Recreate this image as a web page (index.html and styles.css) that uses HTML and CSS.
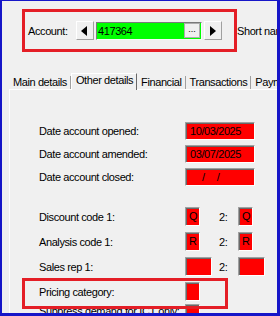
FILE: index.html
```html
<!DOCTYPE html>
<html lang="en">
<head>
    <meta charset="UTF-8">
    <meta name="viewport" content="width=device-width, initial-scale=1.0">
    <title>Account - Other details</title>
    <link rel="stylesheet" href="styles.css">
</head>
<body>
    <div class="window">
        <div class="head">
            <div class="account-box">
                <span class="account-label">Account:</span>
                <button class="nav"><span class="arrow-left"></span></button>
                <div class="lookup">
                    <span class="lookup-value">417364</span>
                    <button class="dots">...</button>
                </div>
                <button class="nav"><span class="arrow-right"></span></button>
            </div>
            <span class="short-name">Short name:</span>
        </div>

        <div class="tabs">
            <div class="tab">Main details</div>
            <div class="tab active">Other details</div>
            <div class="tab">Financial</div>
            <div class="tab">Transactions</div>
            <div class="tab">Payments</div>
        </div>

        <div class="panel">
            <div class="row">
                <span class="label">Date account opened:</span>
                <span class="field date">10/03/2025</span>
            </div>
            <div class="row">
                <span class="label">Date account amended:</span>
                <span class="field date">03/07/2025</span>
            </div>
            <div class="row">
                <span class="label">Date account closed:</span>
                <span class="field date"><span class="blank"></span>/<span class="blank"></span>/</span>
            </div>

            <div class="row code first">
                <span class="label">Discount code 1:</span>
                <span class="cell"><span class="field small">Q</span></span>
                <span class="num">2:</span>
                <span class="field small">Q</span>
            </div>
            <div class="row code">
                <span class="label">Analysis code 1:</span>
                <span class="cell"><span class="field small">R</span></span>
                <span class="num">2:</span>
                <span class="field small">R</span>
            </div>
            <div class="row code">
                <span class="label">Sales rep 1:</span>
                <span class="cell"><span class="field wide"></span></span>
                <span class="num">2:</span>
                <span class="field wide"></span>
            </div>
            <div class="row code marked">
                <span class="label">Pricing category:</span>
                <span class="cell"><span class="field small"></span></span>
            </div>
            <div class="row code last">
                <span class="label">Suppress demand for ICT only:</span>
                <span class="cell"><span class="field small"></span></span>
            </div>
        </div>
    </div>
</body>
</html>
```

FILE: styles.css
```css
* {
    box-sizing: border-box;
}
body {
    margin: 0;
    font-family: "Liberation Sans", Arial, sans-serif;
    font-size: 11px;
    letter-spacing: -0.4px;
    color: #000;
    background: #f0f0f0;
}
.window {
    width: 280px;
    height: 316px;
    border: solid #1616c8;
    border-width: 1px 3px 3px 2px;
    background: #f0f0f0;
    overflow: hidden;
}

/* account header */
.head {
    display: flex;
    align-items: center;
    margin: 8px 0 0 20px;
    white-space: nowrap;
}
.account-box {
    flex-shrink: 0;
    display: flex;
    align-items: center;
    width: 215px;
    height: 43px;
    padding-left: 3px;
    border: 3px solid #e41e26;
}
.account-label {
    width: 48px;
}
.nav {
    display: flex;
    align-items: center;
    justify-content: center;
    width: 18px;
    height: 19px;
    padding: 0;
    border: 1px solid;
    border-color: #fff #a0a0a0 #a0a0a0 #fff;
    background: #f0f0f0;
}
.arrow-left {
    border-top: 5px solid transparent;
    border-bottom: 5px solid transparent;
    border-right: 6px solid #000;
    margin-left: -3px;
}
.arrow-right {
    border-top: 5px solid transparent;
    border-bottom: 5px solid transparent;
    border-left: 6px solid #000;
}
.lookup {
    display: flex;
    align-items: center;
    width: 106px;
    height: 18px;
    margin: 0 2px;
    padding-left: 1px;
    border: 1px solid;
    border-color: #7a7a7a #f8f8f8 #f8f8f8 #7a7a7a;
    background: #00ff00;
}
.lookup-value {
    flex: 1;
}
.dots {
    width: 16px;
    height: 15px;
    margin-right: 1px;
    padding: 0 0 3px;
    border: 1px solid #adadad;
    background: #f0f0f0;
    font: 9px "Liberation Sans", Arial, sans-serif;
    line-height: 9px;
    color: #000;
}
.short-name {
    margin-left: 0;
}

/* tabs */
.tabs {
    display: flex;
    align-items: flex-end;
    height: 16px;
    margin: 21px 0 0 7px;
    white-space: nowrap;
}
.tab {
    flex-shrink: 0;
    height: 13px;
    line-height: 13px;
    padding: 0 3px 0 4px;
    border-right: 1px solid #a0a0a0;
}
.tab.active {
    position: relative;
    height: 17px;
    margin-bottom: -1px;
    padding: 0 3px 0 4px;
    border-top: 1px solid #fff;
    border-left: 1px solid #fff;
    border-right: 1px solid #696969;
    background: #f0f0f0;
}

/* panel */
.panel {
    height: 240px;
    margin-left: 7px;
    padding: 32px 0 0 29px;
    border-top: 1px solid #fff;
    border-left: 1px solid #fff;
}
.row {
    display: flex;
    align-items: center;
    height: 18px;
    margin-bottom: 5px;
    white-space: nowrap;
}
.row.code {
    height: 19px;
    margin-bottom: 6px;
}
.row.first {
    margin-top: 21px;
}
.row.marked {
    position: relative;
    margin-bottom: 3px;
}
.row.marked::after {
    content: "";
    position: absolute;
    left: -17px;
    top: -4px;
    width: 200px;
    height: 25px;
    border: 3px solid #e41e26;
}
.row.last {
    align-items: flex-start;
}
.row.last .label {
    line-height: 15px;
}
.label {
    width: 146px;
}
.cell {
    width: 34px;
}
.num {
    width: 19px;
}
.field {
    display: block;
    height: 100%;
    padding-left: 3px;
    border: 1px solid;
    border-color: #a0a0a0 #fff #fff #a0a0a0;
    box-shadow: inset 1px 1px #696969;
    background: #ff0000;
    line-height: 16px;
}
.row.code .field {
    height: 19px;
    line-height: 17px;
}
.field.date {
    width: 70px;
    padding-left: 4px;
}
.field.small {
    width: 15px;
}
.field.wide {
    width: 27px;
}
.blank {
    display: inline-block;
    width: 12px;
}
```
